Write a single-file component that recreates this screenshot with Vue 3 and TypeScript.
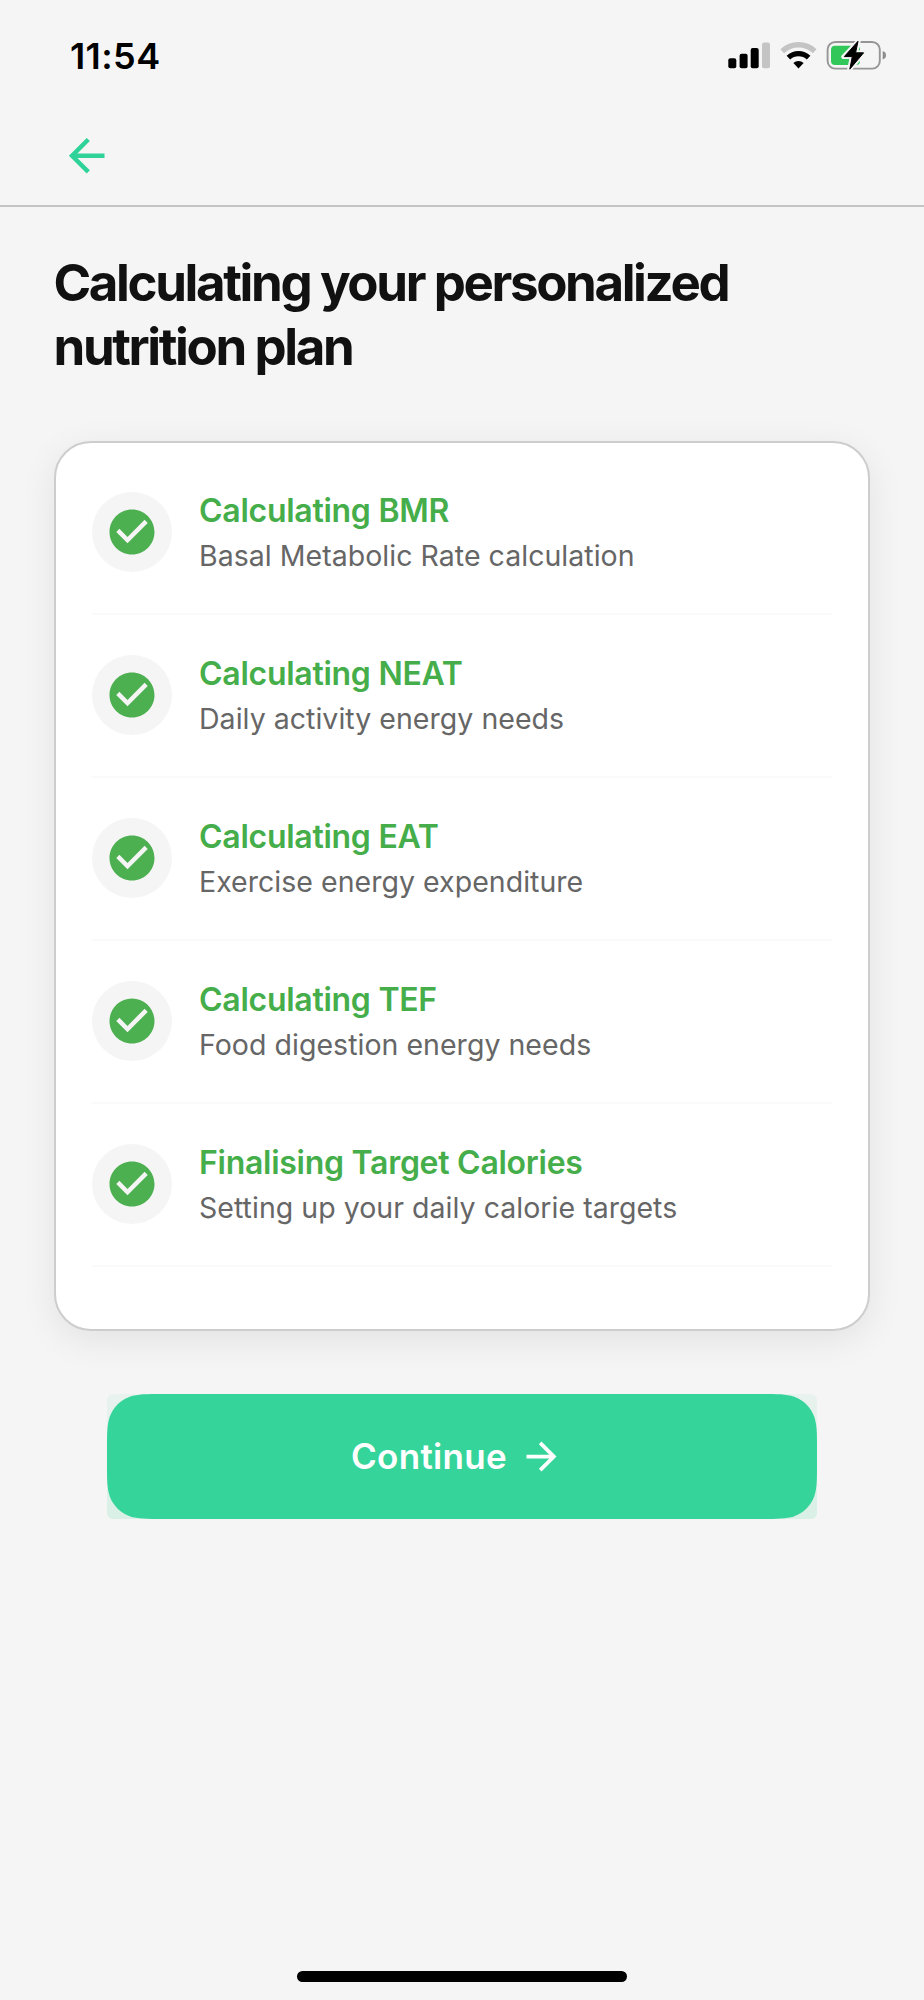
<script setup lang="ts">
interface Step {
  title: string
  detail: string
}

const steps: Step[] = [
  { title: 'Calculating BMR', detail: 'Basal Metabolic Rate calculation' },
  { title: 'Calculating NEAT', detail: 'Daily activity energy needs' },
  { title: 'Calculating EAT', detail: 'Exercise energy expenditure' },
  { title: 'Calculating TEF', detail: 'Food digestion energy needs' },
  { title: 'Finalising Target Calories', detail: 'Setting up your daily calorie targets' },
]

const buttonWidth = 710
const buttonHeight = 125

// Outline of a rectangle with continuous (smoothly eased) corners.
function smoothRect(w: number, h: number, r: number): string {
  const quarter: [number, number][] = [
    [0, 1.52866], [0, 1.08849], [0, 0.86841], [0.07491, 0.63149],
    [0.16906, 0.37282], [0.37282, 0.16906], [0.63149, 0.07491],
    [0.86841, 0], [1.08849, 0], [1.52866, 0],
  ]
  const reversed = [...quarter].reverse()
  const corners = [
    quarter.map(([x, y]) => [x * r, y * r]),
    reversed.map(([x, y]) => [w - x * r, y * r]),
    quarter.map(([x, y]) => [w - x * r, h - y * r]),
    reversed.map(([x, y]) => [x * r, h - y * r]),
  ]
  const parts = corners.map((points, i) => {
    const p = points.map(([x, y]) => `${x.toFixed(2)} ${y.toFixed(2)}`)
    return `${i === 0 ? 'M' : 'L'}${p[0]} C${p.slice(1).join(' ')}`
  })
  return `${parts.join(' ')} Z`
}

const buttonShape = smoothRect(buttonWidth, buttonHeight, 36)
</script>

<template>
  <div class="screen">
    <div class="status-bar">
      <span class="time">11:54</span>
      <div class="indicators">
        <svg width="42" height="30" viewBox="0 0 42 30">
          <rect x="0.3" y="18.2" width="8" height="10" rx="2" />
          <rect x="11.6" y="13.8" width="8" height="14.4" rx="2" />
          <rect x="22.7" y="8" width="8" height="20.2" rx="2" />
          <rect x="34" y="2.4" width="8" height="25.8" rx="2" fill="#c4c4c4" />
        </svg>
        <svg class="wifi" width="38" height="30" viewBox="0 0 38 30">
          <path d="M2.3 11.2A23.7 23.7 0 0 1 34.7 11.2" fill="none" stroke="#c4c4c4" stroke-width="5.4" />
          <path d="M8.4 17.7A14.6 14.6 0 0 1 28.6 17.7" fill="none" stroke="#000" stroke-width="5.2" />
          <path d="M18.5 28.4L13.4 23A7.6 7.6 0 0 1 23.6 23Z" />
        </svg>
        <svg class="battery" width="61" height="32" viewBox="0 0 61 32">
          <rect x="1.6" y="3" width="52.2" height="26.6" rx="7.6" fill="none" stroke="#969696" stroke-width="1.9" />
          <path d="M56.7 12q3.3 1.1 3.3 4.3t-3.3 4.3z" fill="#8c8c8c" />
          <rect x="5" y="6.8" width="29" height="19.2" rx="4" fill="#32c759" />
          <path d="M32.5 2L17.5 17.8h8.6L23.4 30.4 38.4 13.6h-8.6z" fill="#f5f5f5" stroke="#f5f5f5" stroke-width="4.5" stroke-linejoin="round" />
          <path d="M32 2.2L18.3 17.6h8L23.8 30.2 37.6 13.8h-8z" stroke="#000" stroke-width="1" stroke-linejoin="round" />
        </svg>
      </div>
    </div>

    <header class="nav">
      <svg class="back" width="53.4" height="53.4" viewBox="0 0 24 24">
        <path d="M20 11H7.83l5.59-5.59L12 4l-8 8 8 8 1.41-1.41L7.83 13H20v-2z" />
      </svg>
    </header>

    <main class="content">
      <h1 class="heading">Calculating your personalized<br />nutrition plan</h1>

      <section class="card">
        <div v-for="step in steps" :key="step.title" class="step">
          <div class="badge">
            <svg width="54" height="54" viewBox="0 0 24 24">
              <path d="M12 2C6.48 2 2 6.48 2 12s4.48 10 10 10 10-4.48 10-10S17.52 2 12 2zm-2 15l-5-5 1.41-1.41L10 14.17l7.59-7.59L19 8l-9 9z" />
            </svg>
          </div>
          <div class="labels">
            <div class="step-title">{{ step.title }}</div>
            <div class="step-detail">{{ step.detail }}</div>
          </div>
        </div>
      </section>

      <button class="continue" type="button">
        <svg class="continue-shape" :width="buttonWidth" :height="buttonHeight" :viewBox="`0 0 ${buttonWidth} ${buttonHeight}`">
          <path :d="buttonShape" />
        </svg>
        <span class="continue-label">Continue</span>
        <svg class="continue-arrow" width="45" height="45" viewBox="0 0 24 24">
          <path d="M12 4l-1.41 1.41L16.17 11H4v2h12.17l-5.58 5.59L12 20l8-8z" />
        </svg>
      </button>
    </main>

    <div class="home-indicator"></div>
  </div>
</template>

<style>
body {
  background: #f5f5f5;
}
</style>

<style scoped>
.screen {
  display: flex;
  flex-direction: column;
  box-sizing: border-box;
  width: 924px;
  height: 2000px;
  padding-bottom: 18px;
  overflow: hidden;
  background: #f5f5f5;
  font-family: Inter, "Liberation Sans", sans-serif;
}

svg {
  display: block;
  flex: none;
}

.status-bar {
  display: flex;
  justify-content: space-between;
  align-items: flex-start;
  box-sizing: border-box;
  height: 128px;
  padding: 33px 37px 0 70px;
}

.time {
  margin-top: 1px;
  font-size: 36px;
  font-weight: 560;
  line-height: 44px;
  letter-spacing: 0.4px;
  color: #000;
}

.indicators {
  display: flex;
  align-items: flex-start;
  padding-top: 7px;
}

.wifi {
  margin-left: 10px;
}

.battery {
  margin-left: 8px;
  margin-top: -1px;
}

.nav {
  box-sizing: border-box;
  height: 79px;
  padding: 0.5px 0 0 59.5px;
  border-bottom: 2px solid #c4c4c4;
}

.back {
  fill: #2fd39a;
}

.content {
  display: flex;
  flex-direction: column;
  flex: 1;
  padding: 44px 54px 0;
}

.heading {
  margin: 0 0 0 -0.5px;
  font-size: 51px;
  font-weight: 700;
  line-height: 63.7px;
  letter-spacing: -2.37px;
  color: #111;
  white-space: nowrap;
}

.card {
  box-sizing: border-box;
  height: 890px;
  margin-top: 62.6px;
  padding: 9px 36px 0;
  border: 2px solid #cdcdcd;
  border-radius: 37px;
  background: #fff;
  box-shadow: 0 9px 36px rgba(0, 0, 0, 0.08);
}

.step {
  display: flex;
  gap: 27px;
  box-sizing: border-box;
  height: 163px;
  padding-top: 40px;
  border-bottom: 2px solid #fafafa;
}

.badge {
  display: flex;
  flex: none;
  align-items: center;
  justify-content: center;
  width: 80px;
  height: 80px;
  border-radius: 50%;
  background: #f5f5f5;
  fill: #4caf50;
}

.labels {
  margin-top: -1px;
}

.step-title {
  font-size: 32px;
  font-weight: 580;
  line-height: 40px;
  letter-spacing: -0.27px;
  color: #45ae4a;
}

.step-detail {
  margin-top: 8px;
  font-size: 28.5px;
  line-height: 34px;
  letter-spacing: 0.03px;
  color: #666;
}

.continue {
  position: relative;
  display: flex;
  align-self: center;
  align-items: center;
  justify-content: center;
  box-sizing: border-box;
  width: 710px;
  height: 125px;
  margin-top: 63px;
  padding: 0 9px 0 0;
  border: 0;
  border-radius: 6px;
  background: linear-gradient(#e8f2ee, #d9f0e7);
  color: #fff;
  font-family: inherit;
}

.continue-shape {
  position: absolute;
  inset: 0;
  fill: #35d49a;
}

.continue-label {
  position: relative;
  margin-bottom: 2px;
  font-size: 35px;
  font-weight: 580;
  line-height: 44px;
  letter-spacing: 0.3px;
}

.continue-arrow {
  position: relative;
  margin-left: 12px;
  fill: #fff;
}

.home-indicator {
  align-self: center;
  width: 330px;
  height: 11px;
  border-radius: 6px;
  background: #000;
}
</style>
